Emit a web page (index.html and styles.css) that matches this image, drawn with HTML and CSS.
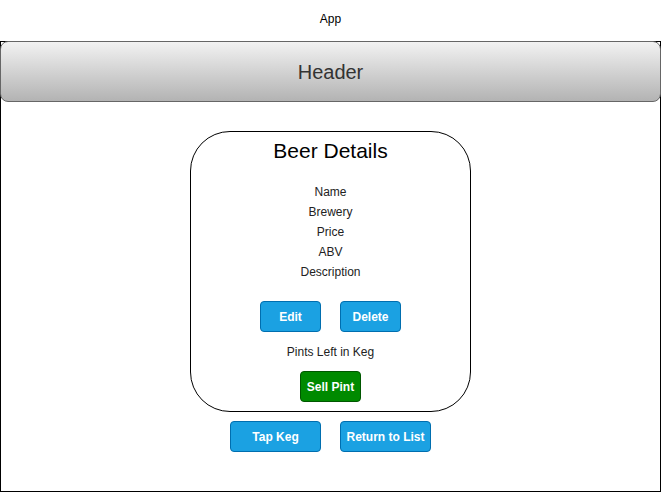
FILE: index.html
```html
<!DOCTYPE html>
<html>
<head>
<meta charset="utf-8">
<link rel="stylesheet" href="styles.css">
</head>
<body>
<div class="app-label">App</div>
<div class="frame">
  <div class="header">Header</div>
  <div class="card">
    <div class="card-title">Beer Details</div>
    <div class="fields">
      <div class="field">Name</div>
      <div class="field">Brewery</div>
      <div class="field">Price</div>
      <div class="field">ABV</div>
      <div class="field">Description</div>
    </div>
    <div class="btn-row edit-row">
      <button class="btn blue">Edit</button>
      <button class="btn blue">Delete</button>
    </div>
    <div class="pints">Pints Left in Keg</div>
    <div class="btn-row sell-row">
      <button class="btn green">Sell Pint</button>
    </div>
  </div>
  <div class="btn-row bottom-row">
    <button class="btn blue wide">Tap Keg</button>
    <button class="btn blue wide">Return to List</button>
  </div>
</div>
</body>
</html>
```
FILE: styles.css
```css
html, body {
  margin: 0;
  padding: 0;
  background: #fff;
  font-family: "Liberation Sans", Arial, sans-serif;
}
.app-label {
  height: 41px;
  box-sizing: border-box;
  padding-top: 12px;
  font-size: 12px;
  line-height: 14px;
  text-align: center;
  color: #000;
}
.frame {
  width: 661px;
  height: 451px;
  box-sizing: border-box;
  border: 1px solid #000;
  display: flex;
  flex-direction: column;
  align-items: center;
}
.header {
  align-self: stretch;
  margin: -1px -1px 0;
  height: 61px;
  box-sizing: border-box;
  border: 1px solid #666;
  border-radius: 8px;
  background: linear-gradient(to bottom, #f2f2f2, #b3b3b3);
  color: #333;
  font-size: 20px;
  padding-top: 1px;
  display: flex;
  align-items: center;
  justify-content: center;
}
.card {
  margin-top: 29px;
  width: 281px;
  height: 281px;
  box-sizing: border-box;
  border: 1px solid #000;
  border-radius: 40px;
  padding-top: 7px;
  display: flex;
  flex-direction: column;
  align-items: center;
}
.card-title {
  font-size: 21px;
  line-height: 24px;
  color: #000;
}
.fields {
  margin-top: 19px;
  text-align: center;
}
.field, .pints {
  font-size: 12px;
  line-height: 20px;
  color: #222;
}
.btn-row {
  display: flex;
  gap: 19px;
  justify-content: center;
}
.edit-row { margin-top: 19px; }
.pints { margin-top: 10px; }
.sell-row { margin-top: 9px; }
.bottom-row { margin-top: 9px; }
.btn {
  width: 61px;
  height: 31px;
  box-sizing: border-box;
  border-radius: 4px;
  border: 1px solid #006eaf;
  font-family: "Liberation Sans", Arial, sans-serif;
  font-weight: bold;
  font-size: 12px;
  color: #fff;
  padding: 0;
  margin: 0;
}
.btn.blue { background: #1ba1e2; }
.btn.green { background: #008a00; border-color: #005700; }
.btn.wide { width: 91px; }
```
